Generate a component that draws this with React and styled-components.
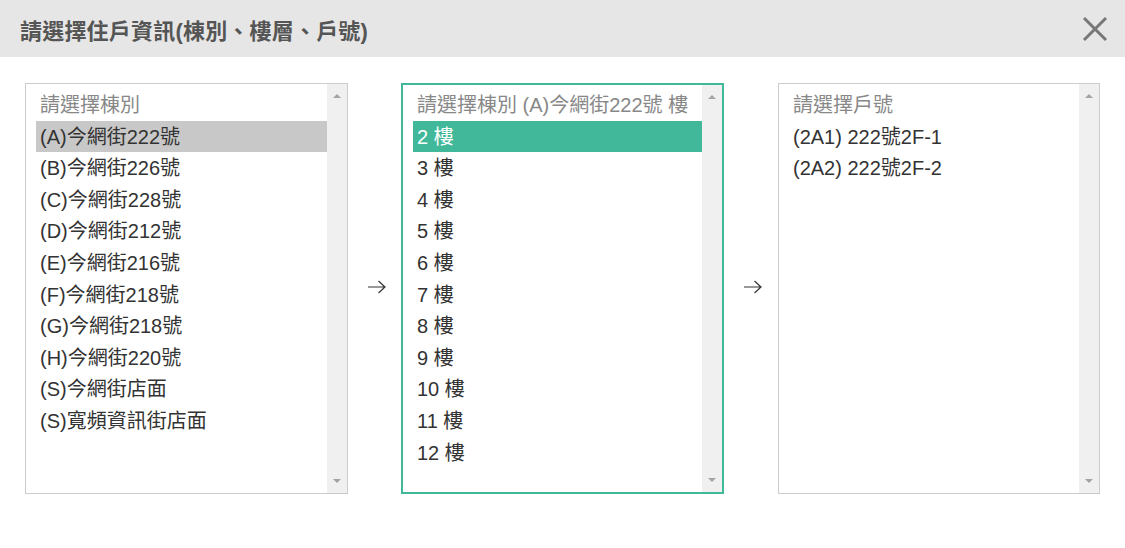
import React from "react";
import styled, { createGlobalStyle } from "styled-components";

const GlobalStyle = createGlobalStyle`
  html, body {
    margin: 0;
    padding: 0;
    background: #fff;
    font-family: "Liberation Sans", "Noto Sans CJK TC", sans-serif;
  }
`;

const Dialog = styled.div`
  width: 1125px;
  height: 548px;
  background: #fff;
`;

const Header = styled.div`
  height: 57px;
  background: #e6e6e6;
  display: flex;
  align-items: center;
  justify-content: space-between;
  padding: 0 16px 0 20px;
  box-sizing: border-box;
`;

const Title = styled.h2`
  margin: 0;
  font-size: 22px;
  font-weight: bold;
  color: #555;
  letter-spacing: 0.2px;
`;

const Close = styled.button`
  border: 0;
  background: transparent;
  padding: 0;
  width: 28px;
  height: 28px;
  display: flex;
  align-items: center;
  justify-content: center;
  cursor: pointer;
`;

const Body = styled.div`
  display: grid;
  grid-template-columns: 323px 53px 323px 54px 322px;
  padding: 26px 25px 0;
  height: 411px;
`;

const Arrow = styled.div`
  display: flex;
  align-items: center;
  justify-content: center;
  padding: 0 0 4px 4px;
`;

const ListBox = styled.div`
  border: ${(p) => (p.$active ? "2px solid #41b899" : "1px solid #ccc")};
  display: flex;
  min-width: 0;
  background: #fff;
`;

const Options = styled.div`
  flex: 1;
  min-width: 0;
  padding: ${(p) => (p.$active ? "4px 0 0 10px" : "5px 0 0 10px")};
  overflow: hidden;
`;

const Option = styled.div`
  height: 31.6px;
  line-height: 33px;
  padding-left: 4px;
  font-size: 20px;
  white-space: nowrap;
  overflow: hidden;
  color: ${(p) => (p.$placeholder ? "#888" : p.$teal ? "#fff" : "#333")};
  background: ${(p) => (p.$teal ? "#41b899" : p.$selected ? "#c8c8c8" : "transparent")};
`;

const Scrollbar = styled.div`
  width: 20px;
  flex: none;
  background: #f0f0f0;
  display: flex;
  flex-direction: column;
  justify-content: space-between;
  align-items: center;
  padding: 10px 0 10px;
  box-sizing: border-box;
`;

const Tri = styled.span`
  width: 0;
  height: 0;
  border-left: 4px solid transparent;
  border-right: 4px solid transparent;
  ${(p) =>
    p.$down
      ? "border-top: 4px solid #a3a3a3;"
      : "border-bottom: 4px solid #a3a3a3;"}
`;

const buildings = [
  "(A)今網街222號",
  "(B)今網街226號",
  "(C)今網街228號",
  "(D)今網街212號",
  "(E)今網街216號",
  "(F)今網街218號",
  "(G)今網街218號",
  "(H)今網街220號",
  "(S)今網街店面",
  "(S)寬頻資訊街店面",
];

const floors = ["2 樓", "3 樓", "4 樓", "5 樓", "6 樓", "7 樓", "8 樓", "9 樓", "10 樓", "11 樓", "12 樓"];

const units = ["(2A1) 222號2F-1", "(2A2) 222號2F-2"];

const Bar = () => (
  <Scrollbar>
    <Tri />
    <Tri $down />
  </Scrollbar>
);

const ArrowIcon = () => (
  <Arrow>
    <svg width="20" height="14" viewBox="0 0 20 14" fill="none" stroke="#333" strokeWidth="1.2">
      <path d="M1 7h17M11.5 1l6.5 6-6.5 6" />
    </svg>
  </Arrow>
);

export default function App() {
  return (
    <>
      <GlobalStyle />
      <Dialog>
        <Header>
          <Title>請選擇住戶資訊(棟別、樓層、戶號)</Title>
          <Close aria-label="close">
            <svg width="26" height="26" viewBox="0 0 26 26" stroke="#777" strokeWidth="3">
              <path d="M2 2l22 22M24 2L2 24" />
            </svg>
          </Close>
        </Header>
        <Body>
          <ListBox>
            <Options>
              <Option $placeholder>請選擇棟別</Option>
              {buildings.map((b, i) => (
                <Option key={b + i} $selected={i === 0}>
                  {b}
                </Option>
              ))}
            </Options>
            <Bar />
          </ListBox>
          <ArrowIcon />
          <ListBox $active>
            <Options $active>
              <Option $placeholder>請選擇棟別 (A)今網街222號 樓</Option>
              {floors.map((f, i) => (
                <Option key={f} $teal={i === 0}>
                  {f}
                </Option>
              ))}
            </Options>
            <Bar />
          </ListBox>
          <ArrowIcon />
          <ListBox>
            <Options>
              <Option $placeholder>請選擇戶號</Option>
              {units.map((u) => (
                <Option key={u}>{u}</Option>
              ))}
            </Options>
            <Bar />
          </ListBox>
        </Body>
      </Dialog>
    </>
  );
}
